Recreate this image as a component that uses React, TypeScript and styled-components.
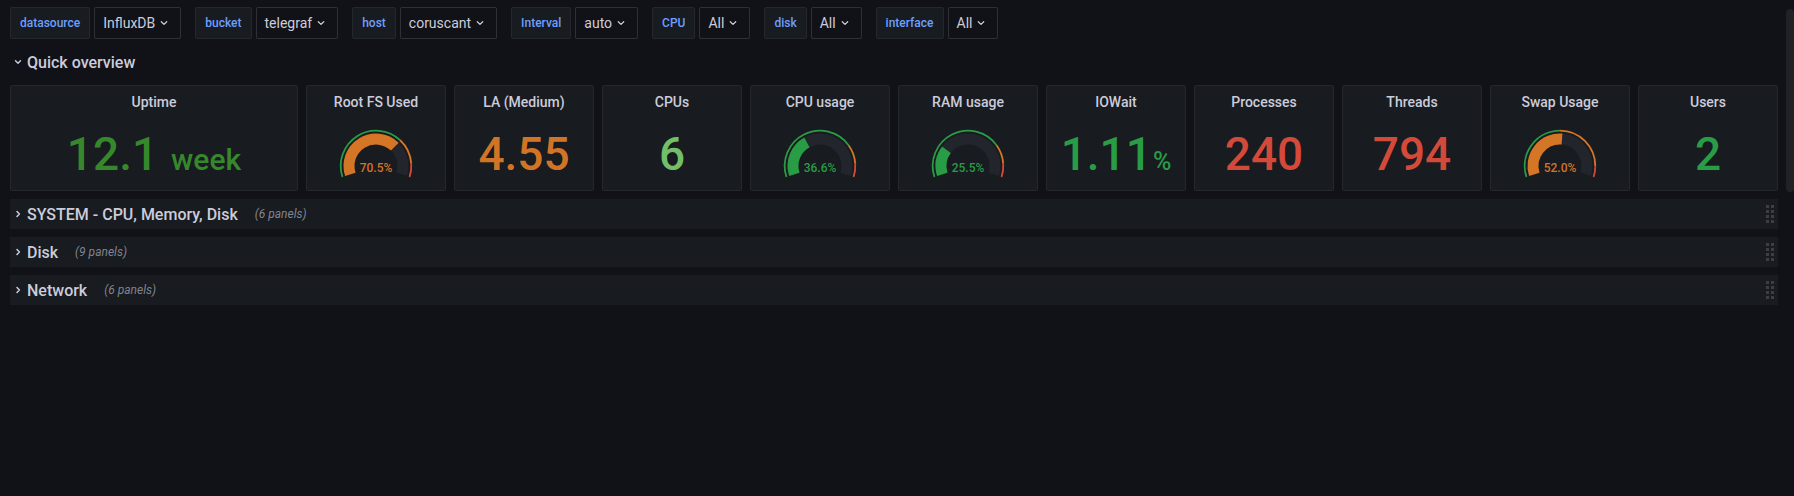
import React from "react";
import styled, { createGlobalStyle } from "styled-components";

const GREEN = "#299c46";
const ORANGE = "rgba(237, 129, 40, 0.89)";
const RED = "#d44a3a";

const GlobalStyle = createGlobalStyle`
  * { box-sizing: border-box; }
  html, body, #root { margin: 0; height: 100%; }
  body {
    background: #111217;
    color: #ccccdc;
    font-family: Roboto, "Liberation Sans", sans-serif;
    overflow: hidden;
  }
`;

interface IVariable {
  label: string;
  value: string;
}

const variables: IVariable[] = [
  { label: "datasource", value: "InfluxDB" },
  { label: "bucket", value: "telegraf" },
  { label: "host", value: "coruscant" },
  { label: "Interval", value: "auto" },
  { label: "CPU", value: "All" },
  { label: "disk", value: "All" },
  { label: "interface", value: "All" },
];

type Threshold = { from: number; color: string };

interface IPanel {
  title: string;
  span?: number;
  kind: "stat" | "gauge";
  value: string;
  unit?: string;
  unitSize?: number;
  unitGap?: number;
  color: string;
  percent?: number;
  thresholds?: Threshold[];
}

const defaultSteps: Threshold[] = [
  { from: 0, color: GREEN },
  { from: 0.75, color: ORANGE },
  { from: 0.9, color: RED },
];

const panels: IPanel[] = [
  { title: "Uptime", span: 2, kind: "stat", value: "12.1", unit: "week", unitSize: 30, unitGap: 13, color: "#37872d" },
  {
    title: "Root FS Used",
    kind: "gauge",
    value: "70.5%",
    percent: 0.705,
    color: ORANGE,
    thresholds: [
      { from: 0, color: GREEN },
      { from: 0.7, color: ORANGE },
      { from: 0.9, color: RED },
    ],
  },
  { title: "LA (Medium)", kind: "stat", value: "4.55", color: ORANGE },
  { title: "CPUs", kind: "stat", value: "6", color: "#73bf69" },
  { title: "CPU usage", kind: "gauge", value: "36.6%", percent: 0.366, color: GREEN, thresholds: defaultSteps },
  { title: "RAM usage", kind: "gauge", value: "25.5%", percent: 0.255, color: GREEN, thresholds: defaultSteps },
  { title: "IOWait", kind: "stat", value: "1.11", unit: "%", unitSize: 25, unitGap: 1, color: GREEN },
  { title: "Processes", kind: "stat", value: "240", color: RED },
  { title: "Threads", kind: "stat", value: "794", color: RED },
  {
    title: "Swap Usage",
    kind: "gauge",
    value: "52.0%",
    percent: 0.52,
    color: ORANGE,
    thresholds: [
      { from: 0, color: GREEN },
      { from: 0.5, color: ORANGE },
      { from: 0.92, color: RED },
    ],
  },
  { title: "Users", kind: "stat", value: "2", color: GREEN },
];

const collapsedRows = [
  { title: "SYSTEM - CPU, Memory, Disk", count: 6 },
  { title: "Disk", count: 9 },
  { title: "Network", count: 6 },
];

const Chevron = ({ dir }: { dir: "down" | "right" }) => (
  <svg width="14" height="14" viewBox="0 0 14 14" fill="none">
    {dir === "down" ? (
      <path d="M4.5 5.8 L7 8.3 L9.5 5.8" stroke="#ccccdc" strokeWidth="1.4" strokeLinecap="round" strokeLinejoin="round" />
    ) : (
      <path d="M6 4.5 L8.4 7 L6 9.5" stroke="#ccccdc" strokeWidth="1.5" strokeLinecap="round" strokeLinejoin="round" />
    )}
  </svg>
);

const SelectCaret = () => (
  <svg width="16" height="16" viewBox="0 0 16 16" fill="none">
    <path d="M5.3 6.8 L8 9.4 L10.7 6.8" stroke="#ccccdc" strokeWidth="1.3" strokeLinecap="round" strokeLinejoin="round" />
  </svg>
);

const CX = 50;
const CY = 48;

const polar = (r: number, f: number) => {
  const a = ((162 + 216 * f) * Math.PI) / 180;
  return [CX + r * Math.cos(a), CY + r * Math.sin(a)];
};

const arc = (r: number, f0: number, f1: number) => {
  const [x0, y0] = polar(r, f0);
  const [x1, y1] = polar(r, f1);
  const large = (f1 - f0) * 216 > 180 ? 1 : 0;
  return `M${x0.toFixed(2)} ${y0.toFixed(2)} A${r} ${r} 0 ${large} 1 ${x1.toFixed(2)} ${y1.toFixed(2)}`;
};

const Gauge = ({ panel }: { panel: IPanel }) => {
  const pct = panel.percent ?? 0;
  const steps = panel.thresholds ?? defaultSteps;
  return (
    <svg width="100" height="72" viewBox="0 0 100 72">
      {steps.map((s, i) => (
        <path
          key={i}
          d={arc(35.3, s.from, i < steps.length - 1 ? steps[i + 1].from : 1)}
          stroke={s.color}
          strokeWidth="1.8"
          fill="none"
        />
      ))}
      <path d={arc(27, pct, 1)} stroke="#22252b" strokeWidth="11" fill="none" />
      <path d={arc(27, 0, pct)} stroke={panel.color} strokeWidth="11" fill="none" />
      <GaugeText x={CX} y={54} fill={panel.color} textAnchor="middle">
        {panel.value}
      </GaugeText>
    </svg>
  );
};

const App = () => {
  return (
    <>
      <GlobalStyle />
      <PageSt>
        <MainSt>
          <VarBarSt>
            {variables.map((v) => (
              <VarGroupSt key={v.label}>
                <VarLabelSt>{v.label}</VarLabelSt>
                <VarSelectSt>
                  {v.value}
                  <SelectCaret />
                </VarSelectSt>
              </VarGroupSt>
            ))}
          </VarBarSt>

          <RowHeaderSt>
            <Chevron dir="down" />
            <RowTitleSt>Quick overview</RowTitleSt>
          </RowHeaderSt>

          <PanelGridSt>
            {panels.map((p) => (
              <PanelSt key={p.title} $span={p.span}>
                <PanelTitleSt>{p.title}</PanelTitleSt>
                <PanelBodySt>
                  {p.kind === "gauge" ? (
                    <Gauge panel={p} />
                  ) : (
                    <StatValueSt $color={p.color}>
                      {p.value}
                      {p.unit && (
                        <StatUnitSt $size={p.unitSize ?? 30} $gap={p.unitGap ?? 6}>
                          {p.unit}
                        </StatUnitSt>
                      )}
                    </StatValueSt>
                  )}
                </PanelBodySt>
              </PanelSt>
            ))}
          </PanelGridSt>

          <CollapsedListSt>
            {collapsedRows.map((r) => (
              <RowHeaderSt key={r.title} $collapsed>
                <Chevron dir="right" />
                <RowTitleSt>{r.title}</RowTitleSt>
                <RowCountSt>({r.count} panels)</RowCountSt>
                <DragHandleSt>
                  {Array.from({ length: 8 }).map((_, i) => (
                    <DotSt key={i} />
                  ))}
                </DragHandleSt>
              </RowHeaderSt>
            ))}
          </CollapsedListSt>
        </MainSt>

        <ScrollTrackSt>
          <ScrollThumbSt />
        </ScrollTrackSt>
      </PageSt>
    </>
  );
};

export default App;

const PageSt = styled.div`
  display: flex;
  height: 100%;
`;

const MainSt = styled.main`
  flex: 1;
  min-width: 0;
  padding: 7px 8px 0 10px;
  display: flex;
  flex-direction: column;
`;

const ScrollTrackSt = styled.div`
  width: 8px;
  padding-top: 9px;
`;

const ScrollThumbSt = styled.div`
  height: 183px;
  background: #202226;
  border-radius: 4px;
`;

const VarBarSt = styled.div`
  display: flex;
  gap: 14px;
  height: 32px;
`;

const VarGroupSt = styled.div`
  display: flex;
  gap: 4px;
`;

const VarLabelSt = styled.label`
  display: flex;
  align-items: center;
  padding: 0 9px;
  background: #181b1f;
  border: 1px solid rgba(204, 204, 220, 0.07);
  border-radius: 2px;
  color: #6e9fff;
  font-size: 12px;
  font-weight: 500;
`;

const VarSelectSt = styled.button`
  display: flex;
  align-items: center;
  gap: 1px;
  padding: 0 8px;
  background: #111217;
  border: 1px solid rgba(204, 204, 220, 0.16);
  border-radius: 2px;
  color: #ccccdc;
  font-family: inherit;
  font-size: 14px;
`;

const RowHeaderSt = styled.div<{ $collapsed?: boolean }>`
  display: flex;
  align-items: center;
  height: 30px;
  margin-top: ${(p) => (p.$collapsed ? "0" : "8px")};
  background: ${(p) => (p.$collapsed ? "#181b1f" : "transparent")};

  svg {
    flex-shrink: 0;
    margin-left: 1px;
  }
`;

const RowTitleSt = styled.span`
  margin-left: 2px;
  font-size: 16px;
  font-weight: 500;
  color: #ccccdc;
`;

const RowCountSt = styled.span`
  margin-left: 17px;
  font-size: 12px;
  font-style: italic;
  color: rgba(204, 204, 220, 0.6);
`;

const DragHandleSt = styled.div`
  margin-left: auto;
  margin-right: 4px;
  display: grid;
  grid-template-columns: repeat(2, 3px);
  grid-auto-rows: 3px;
  column-gap: 2px;
  row-gap: 2.3px;
`;

const DotSt = styled.span`
  background: #3c3e44;
`;

const PanelGridSt = styled.div`
  display: grid;
  grid-template-columns: repeat(12, 1fr);
  gap: 8px;
  margin-top: 8px;
`;

const PanelSt = styled.section<{ $span?: number }>`
  grid-column: span ${(p) => p.$span ?? 1};
  height: 106px;
  display: flex;
  flex-direction: column;
  background: #181b1f;
  border: 1px solid rgba(204, 204, 220, 0.07);
  border-radius: 2px;
`;

const PanelTitleSt = styled.h2`
  height: 32px;
  margin: 0;
  display: flex;
  align-items: center;
  justify-content: center;
  font-size: 14px;
  font-weight: 500;
  color: #ccccdc;
`;

const PanelBodySt = styled.div`
  flex: 1;
  display: flex;
  align-items: center;
  justify-content: center;
`;

const StatValueSt = styled.div<{ $color: string }>`
  display: flex;
  align-items: baseline;
  color: ${(p) => p.$color};
  font-size: 46px;
  font-weight: 500;
  line-height: 1;
`;

const StatUnitSt = styled.span<{ $size: number; $gap: number }>`
  font-size: ${(p) => p.$size}px;
  margin-left: ${(p) => p.$gap}px;
`;

const GaugeText = styled.text`
  font-family: Roboto, "Liberation Sans", sans-serif;
  font-size: 12px;
  font-weight: 500;
`;

const CollapsedListSt = styled.div`
  display: flex;
  flex-direction: column;
  gap: 8px;
  margin-top: 8px;
`;
